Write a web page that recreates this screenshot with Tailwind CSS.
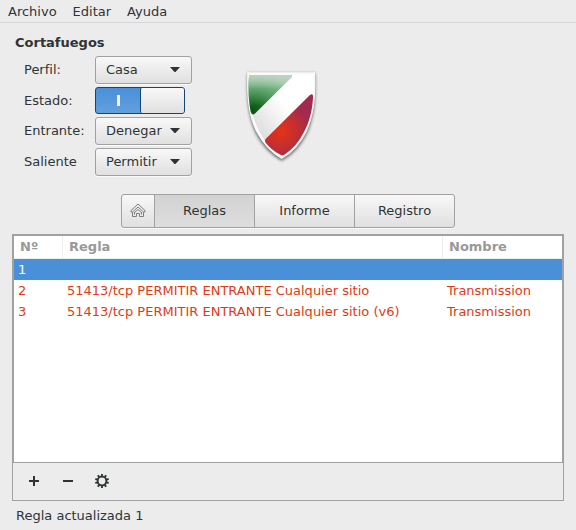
<!DOCTYPE html>
<html lang="es">
<head>
<meta charset="utf-8">
<meta name="viewport" content="width=device-width, initial-scale=1">
<title>Cortafuegos</title>
<script src="https://cdn.jsdelivr.net/npm/@tailwindcss/browser@4"></script>
</head>
<body class="flex min-h-screen flex-col bg-[#ececec] font-['DejaVu_Sans',sans-serif] text-[13px] leading-5 text-[#2e3436]">
  <nav class="flex h-[23px] gap-4 border-b border-[#d6d6d6] px-2 pt-px" aria-label="Menú">
    <button type="button">Archivo</button>
    <button type="button">Editar</button>
    <button type="button">Ayuda</button>
  </nav>

  <main class="flex flex-1 flex-col px-3 pt-[10px]">
    <h1 class="px-[3px] font-bold">Cortafuegos</h1>

    <section class="mt-[3px] flex pl-3">
      <form class="grid grid-cols-[71px_97px] items-center gap-y-[3px]">
        <label for="perfil">Perfil:</label>
        <div class="relative">
          <select id="perfil" class="block h-7 w-full appearance-none rounded-[3px] border border-[#a1a1a1] bg-linear-to-b from-[#f8f8f8] to-[#e0e0e0] pl-[10px] shadow-[0_1px_0_#fafafa]"><option>Casa</option><option>Oficina</option><option>Público</option></select>
          <svg class="pointer-events-none absolute top-[11px] right-3 h-[6px] w-[10px]" viewBox="0 0 10 6" fill="#2e3436"><path d="M0 0h10L5.500 5h-1z"/></svg>
        </div>

        <label for="estado">Estado:</label>
        <label class="relative flex h-[27px] w-[90px] overflow-hidden rounded-[3px] border border-[#184472] bg-linear-to-b from-[#4a90d9] to-[#629fde]">
          <input id="estado" type="checkbox" role="switch" checked class="absolute inset-0 size-full appearance-none">
          <span class="flex flex-1 items-center justify-center"><span class="h-[11px] w-[3px] bg-[#f3f3f3]"></span></span>
          <span class="w-[44px] rounded-l-[2px] border-l border-[#184472] bg-linear-to-b from-[#f8f8f8] to-[#e0e0e0]"></span>
        </label>

        <label for="entrante">Entrante:</label>
        <div class="relative">
          <select id="entrante" class="block h-7 w-full appearance-none rounded-[3px] border border-[#a1a1a1] bg-linear-to-b from-[#f8f8f8] to-[#e0e0e0] pl-[10px] shadow-[0_1px_0_#fafafa]"><option>Denegar</option><option>Rechazar</option><option>Permitir</option></select>
          <svg class="pointer-events-none absolute top-[11px] right-3 h-[6px] w-[10px]" viewBox="0 0 10 6" fill="#2e3436"><path d="M0 0h10L5.500 5h-1z"/></svg>
        </div>

        <label for="saliente">Saliente</label>
        <div class="relative">
          <select id="saliente" class="block h-7 w-full appearance-none rounded-[3px] border border-[#a1a1a1] bg-linear-to-b from-[#f8f8f8] to-[#e0e0e0] pl-[10px] shadow-[0_1px_0_#fafafa]"><option>Permitir</option><option>Rechazar</option><option>Denegar</option></select>
          <svg class="pointer-events-none absolute top-[11px] right-3 h-[6px] w-[10px]" viewBox="0 0 10 6" fill="#2e3436"><path d="M0 0h10L5.500 5h-1z"/></svg>
        </div>
      </form>

      <svg class="mt-1 ml-[43px] h-[110px] w-[95px]" viewBox="0 0 285 330" role="img" aria-label="Escudo">
        <defs>
          <linearGradient id="face" x1="0" y1="1" x2="1" y2="0"><stop offset=".2" stop-color="#dcdcdc"/><stop offset=".6" stop-color="#fff"/></linearGradient>
          <linearGradient id="shine" x1="0" y1="0" x2="0" y2="1"><stop offset="0" stop-color="#d4d8d4" stop-opacity=".85"/><stop offset=".35" stop-color="#fff" stop-opacity=".25"/><stop offset=".8" stop-color="#fff" stop-opacity="0"/></linearGradient>
          <radialGradient id="green" gradientUnits="userSpaceOnUse" cx="52" cy="150" r="125"><stop offset="0" stop-color="#07530f"/><stop offset=".5" stop-color="#2c873e"/><stop offset="1" stop-color="#5bab6c"/></radialGradient>
          <radialGradient id="red" gradientUnits="userSpaceOnUse" cx="138" cy="215" r="90"><stop offset="0" stop-color="#e23418"/><stop offset=".45" stop-color="#c92f2c"/><stop offset="1" stop-color="#a12a4e"/></radialGradient>
          <filter id="soft" x="-20%" y="-20%" width="140%" height="140%"><feGaussianBlur stdDeviation="4"/></filter>
        </defs>
        <path d="M38 40H240C243 105 240 165 216 220Q188 278 140 302Q92 276 65 225C38 172 34 104 38 40Z" fill="#222" opacity=".65" filter="url(#soft)"/>
        <path d="M37 37H240C243 101 240 160 215 215Q187 271 140 297Q94 271 66 219C38 168 34 100 37 37Z" fill="#fafafa"/>
        <path d="M43 44H233C236 102 231 160 208 212Q182 264 141 288Q100 265 74 215C45 164 40 102 43 44Z" fill="url(#face)"/>
        <path d="M46 45H166Q175 45 168 53L61 160Q51 169 47 155C40 118 39 82 42 49Q42 45 46 45Z" fill="url(#green)"/>
        <path d="M46 45H166Q175 45 168 53L61 160Q51 169 47 155C40 118 39 82 42 49Q42 45 46 45Z" fill="url(#shine)"/>
        <path d="M224 106Q235 97 234 113C232 150 224 184 207 216Q184 262 148 284Q141 288 134 283Q107 268 92 248Q87 241 94 235Z" fill="url(#red)"/>
      </svg>
    </section>

    <div class="mt-[18px] flex h-[34px] self-center rounded-[3px] border border-[#a1a1a1] bg-linear-to-b from-[#f8f8f8] to-[#e0e0e0] shadow-[0_1px_0_#fafafa]" role="tablist">
      <button type="button" role="tab" aria-label="Inicio" class="flex w-8 items-center justify-center">
        <svg class="size-4" viewBox="0 0 16 16" fill="none" stroke="#7d7d7d" stroke-width="1"><path d="M1 7.500L8 1l7 6.500v1.500h-1.500L8 4 2.500 9H1z"/><path d="M2.500 9v4.500h4v-3h3v3h4V9M4.500 9v2.500M11.500 9v2.500M4.500 9.500L8 6.500l3.500 3"/></svg>
      </button>
      <button type="button" role="tab" aria-selected="true" class="w-[101px] border-x border-[#a1a1a1] bg-linear-to-b from-[#d2d2d2] to-[#dedede]">Reglas</button>
      <button type="button" role="tab" class="w-[100px] border-r border-[#a1a1a1]">Informe</button>
      <button type="button" role="tab" class="w-[99px]">Registro</button>
    </div>

    <section class="mt-[6px] flex flex-1 flex-col border border-[#a1a1a1]">
      <div class="flex-1 border border-[#a1a1a1] bg-white">
        <table class="w-full table-fixed border-separate border-spacing-0 text-left text-[#e23a14]">
          <colgroup><col class="w-[49px]"><col><col class="w-[119px]"></colgroup>
          <thead class="text-[#999]">
            <tr class="h-[23px]">
              <th class="border-r border-b border-[#ededed] pl-[6px] font-bold">Nº</th>
              <th class="border-r border-b border-[#ededed] pl-[6px] font-bold">Regla</th>
              <th class="border-b border-[#ededed] pl-[6px] font-bold">Nombre</th>
            </tr>
          </thead>
          <tbody>
            <tr class="h-[21px] bg-[#4a90d9] text-white" aria-selected="true"><td class="pl-1">1</td><td class="pl-1"></td><td class="pl-1"></td></tr>
            <tr class="h-[21px]"><td class="pl-1">2</td><td class="pl-1">51413/tcp PERMITIR ENTRANTE Cualquier sitio</td><td class="pl-1">Transmission</td></tr>
            <tr class="h-[21px]"><td class="pl-1">3</td><td class="pl-1">51413/tcp PERMITIR ENTRANTE Cualquier sitio (v6)</td><td class="pl-1">Transmission</td></tr>
          </tbody>
        </table>
      </div>
      <div class="flex h-[37px] items-start gap-[18px] pt-[10px] pl-[13px]" role="toolbar">
        <button type="button" aria-label="Añadir"><svg class="size-4" viewBox="0 0 16 16" fill="#2e3436"><path d="M7 3h2v4h4v2H9v4H7V9H3V7h4z"/></svg></button>
        <button type="button" aria-label="Quitar"><svg class="size-4" viewBox="0 0 16 16" fill="#2e3436"><path d="M3 7h10v2H3z"/></svg></button>
        <button type="button" aria-label="Ajustes"><svg class="size-4" viewBox="0 0 16 16" fill="none" stroke="#2e3436"><circle cx="8" cy="8" r="4.400" stroke-width="2"/><circle cx="8" cy="8" r="6" stroke-width="2" pathLength="100" stroke-dasharray="5 5" stroke-dashoffset="2.500" transform="rotate(-90 8 8)"/></svg></button>
      </div>
    </section>
  </main>

  <footer class="h-[29px] px-4 pt-[5px]" role="status">Regla actualizada 1</footer>
</body>
</html>
